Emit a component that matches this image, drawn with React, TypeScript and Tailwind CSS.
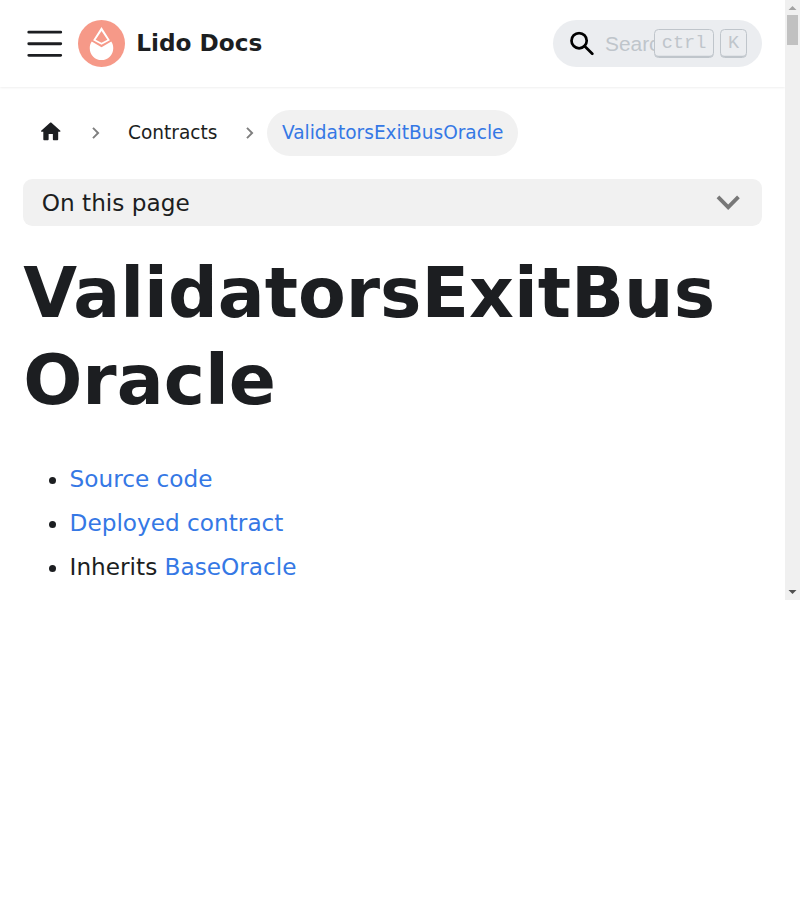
import React from "react";

function MenuIcon() {
  return (
    <svg viewBox="0 0 30 30" className="mr-[11.3px] size-[43.5px] shrink-0" fill="none" stroke="currentColor" strokeWidth="2" strokeLinecap="round">
      <path d="M4 7h22M4 15h22M4 23h22" />
    </svg>
  );
}

function Logo() {
  return (
    <svg viewBox="0 0 140 140" className="mr-[11.3px] size-[47px] shrink-0">
      <circle cx="70" cy="70" r="70" fill="#f69988" />
      <path fill="#fff" fillRule="evenodd" d="M70 21L95 60.500L70 73.500L45 60.500ZM70 33L52.500 58.500L70 67.500L87.500 58.500Z" />
      <path fill="#fff" d="M41 64L70 81L99 64C104 71 105 78 105 84C105 104 89 119.500 70 119.500C51 119.500 35 104 35 84C35 78 36 71 41 64Z" />
    </svg>
  );
}

function SearchIcon() {
  return (
    <svg viewBox="0 0 24 24" className="mr-[11.5px] size-[24px] shrink-0 translate-y-[0.5px]" fill="none" stroke="#000" strokeWidth="2.7">
      <circle cx="9.100" cy="9.200" r="7.600" />
      <path d="M14.500 14.500L22.300 22.300" strokeLinecap="round" />
    </svg>
  );
}

function Separator() {
  return (
    <svg viewBox="0 0 24 24" className="mx-[5.8px] size-[23.2px] shrink-0 translate-y-[0.4px]" fill="#000" fillOpacity="0.5">
      <path transform="rotate(90 12 12)" d="M7.410 15.410L12 10.830l4.590 4.580L18 14l-6-6-6 6z" />
    </svg>
  );
}

function Key({ children }: { children: React.ReactNode }) {
  return (
    <kbd className="flex h-[29px] items-center rounded-[4.5px] border border-[#bfc5cb] px-[6.8px] pt-px font-['Liberation_Mono',monospace] text-[18.56px] leading-none text-[#bfc5cb] shadow-[inset_0_-1.2px_0_#bfc5cb]">
      {children}
    </kbd>
  );
}

function Header() {
  return (
    <header className="flex h-[87px] items-center bg-white px-[23.2px] shadow-[0_1.45px_2.9px_0_rgba(0,0,0,0.1)]">
      <MenuIcon />
      <Logo />
      <b className="text-[23.2px] leading-[38.28px] font-bold">Lido Docs</b>
      <div className="relative ml-auto flex h-[46.4px] w-[208.8px] items-center rounded-full bg-[#ebedf0] pl-[16.5px]">
        <SearchIcon />
        <span className="mt-[2px] w-[50px] overflow-hidden font-['Liberation_Sans',sans-serif] text-[20.88px] leading-none text-[#bfc5cb]">Search</span>
        <div className="absolute right-[14.9px] top-[8.7px] flex gap-[6px]">
          <Key>ctrl</Key>
          <Key>K</Key>
        </div>
      </div>
    </header>
  );
}

function Scrollbar() {
  return (
    <div className="flex h-[600px] w-[15px] shrink-0 flex-col items-center justify-between bg-[#f0f0f0]">
      <div className="flex flex-col items-center">
        <svg className="h-[15px] w-[15px]" viewBox="0 0 15 15" fill="#a3a3a3"><path d="M7.500 6L11.500 10H3.500Z" /></svg>
        <div className="h-[30px] w-[11px] bg-[#c1c1c1]" />
      </div>
      <svg className="h-[15px] w-[15px]" viewBox="0 0 15 15" fill="#505050"><path d="M3.500 5H11.500L7.500 9Z" /></svg>
    </div>
  );
}

export default function App() {
  return (
    <div className="flex h-[900px] w-[800px] items-start overflow-hidden bg-white font-['DejaVu_Sans',sans-serif] text-[#1c1e21]">
      <div className="h-[600px] w-[785px] overflow-hidden">
        <Header />
        <main className="px-[23.2px] pt-[23.2px]">
          <nav className="mb-[23.2px] flex h-[45.5px] items-center text-[18.56px] leading-[30.6px]">
            <svg viewBox="0 0 24 24" className="mr-[15.1px] mb-[1.5px] ml-[14.6px] size-[25.5px] shrink-0" fill="currentColor">
              <path d="M10 19v-5h4v5c0 .55.45 1 1 1h3c.55 0 1-.45 1-1v-7h1.700c.46 0 .68-.57.33-.87L12.670 3.600c-.38-.34-.96-.34-1.340 0l-8.360 7.530c-.34.3-.13.87.33.87H5v7c0 .55.45 1 1 1h3c.55 0 1-.45 1-1z" />
            </svg>
            <Separator />
            <span className="px-[14.85px]">Contracts</span>
            <Separator />
            <span className="rounded-full bg-[#f1f1f1] px-[14.85px] py-[7.42px] text-[#3578e5]">ValidatorsExitBusOracle</span>
          </nav>
          <button className="flex h-[46.8px] w-full items-center justify-between rounded-[9.28px] bg-[#f1f1f1] px-[18.56px] text-[23.2px] leading-[28px]">
            <span className="pt-[2px]">On this page</span>
            <svg viewBox="0 0 24 24" className="-mr-[8.4px] size-[46.4px]" fill="#000" fillOpacity="0.5">
              <path transform="rotate(180 12 12)" d="M7.410 15.410L12 10.830l4.590 4.580L18 14l-6-6-6 6z" />
            </svg>
          </button>
          <h1 className="mt-[23.2px] mb-[36.9px] text-[69.6px] leading-[87px] font-bold wrap-break-word">ValidatorsExitBusOracle</h1>
          <ul className="list-disc space-y-[5.8px] pl-[46.4px] text-[23.2px] leading-[38.28px]">
            <li><a className="text-[#3578e5]">Source code</a></li>
            <li><a className="text-[#3578e5]">Deployed contract</a></li>
            <li>Inherits <a className="text-[#3578e5]">BaseOracle</a></li>
          </ul>
        </main>
      </div>
      <Scrollbar />
    </div>
  );
}
